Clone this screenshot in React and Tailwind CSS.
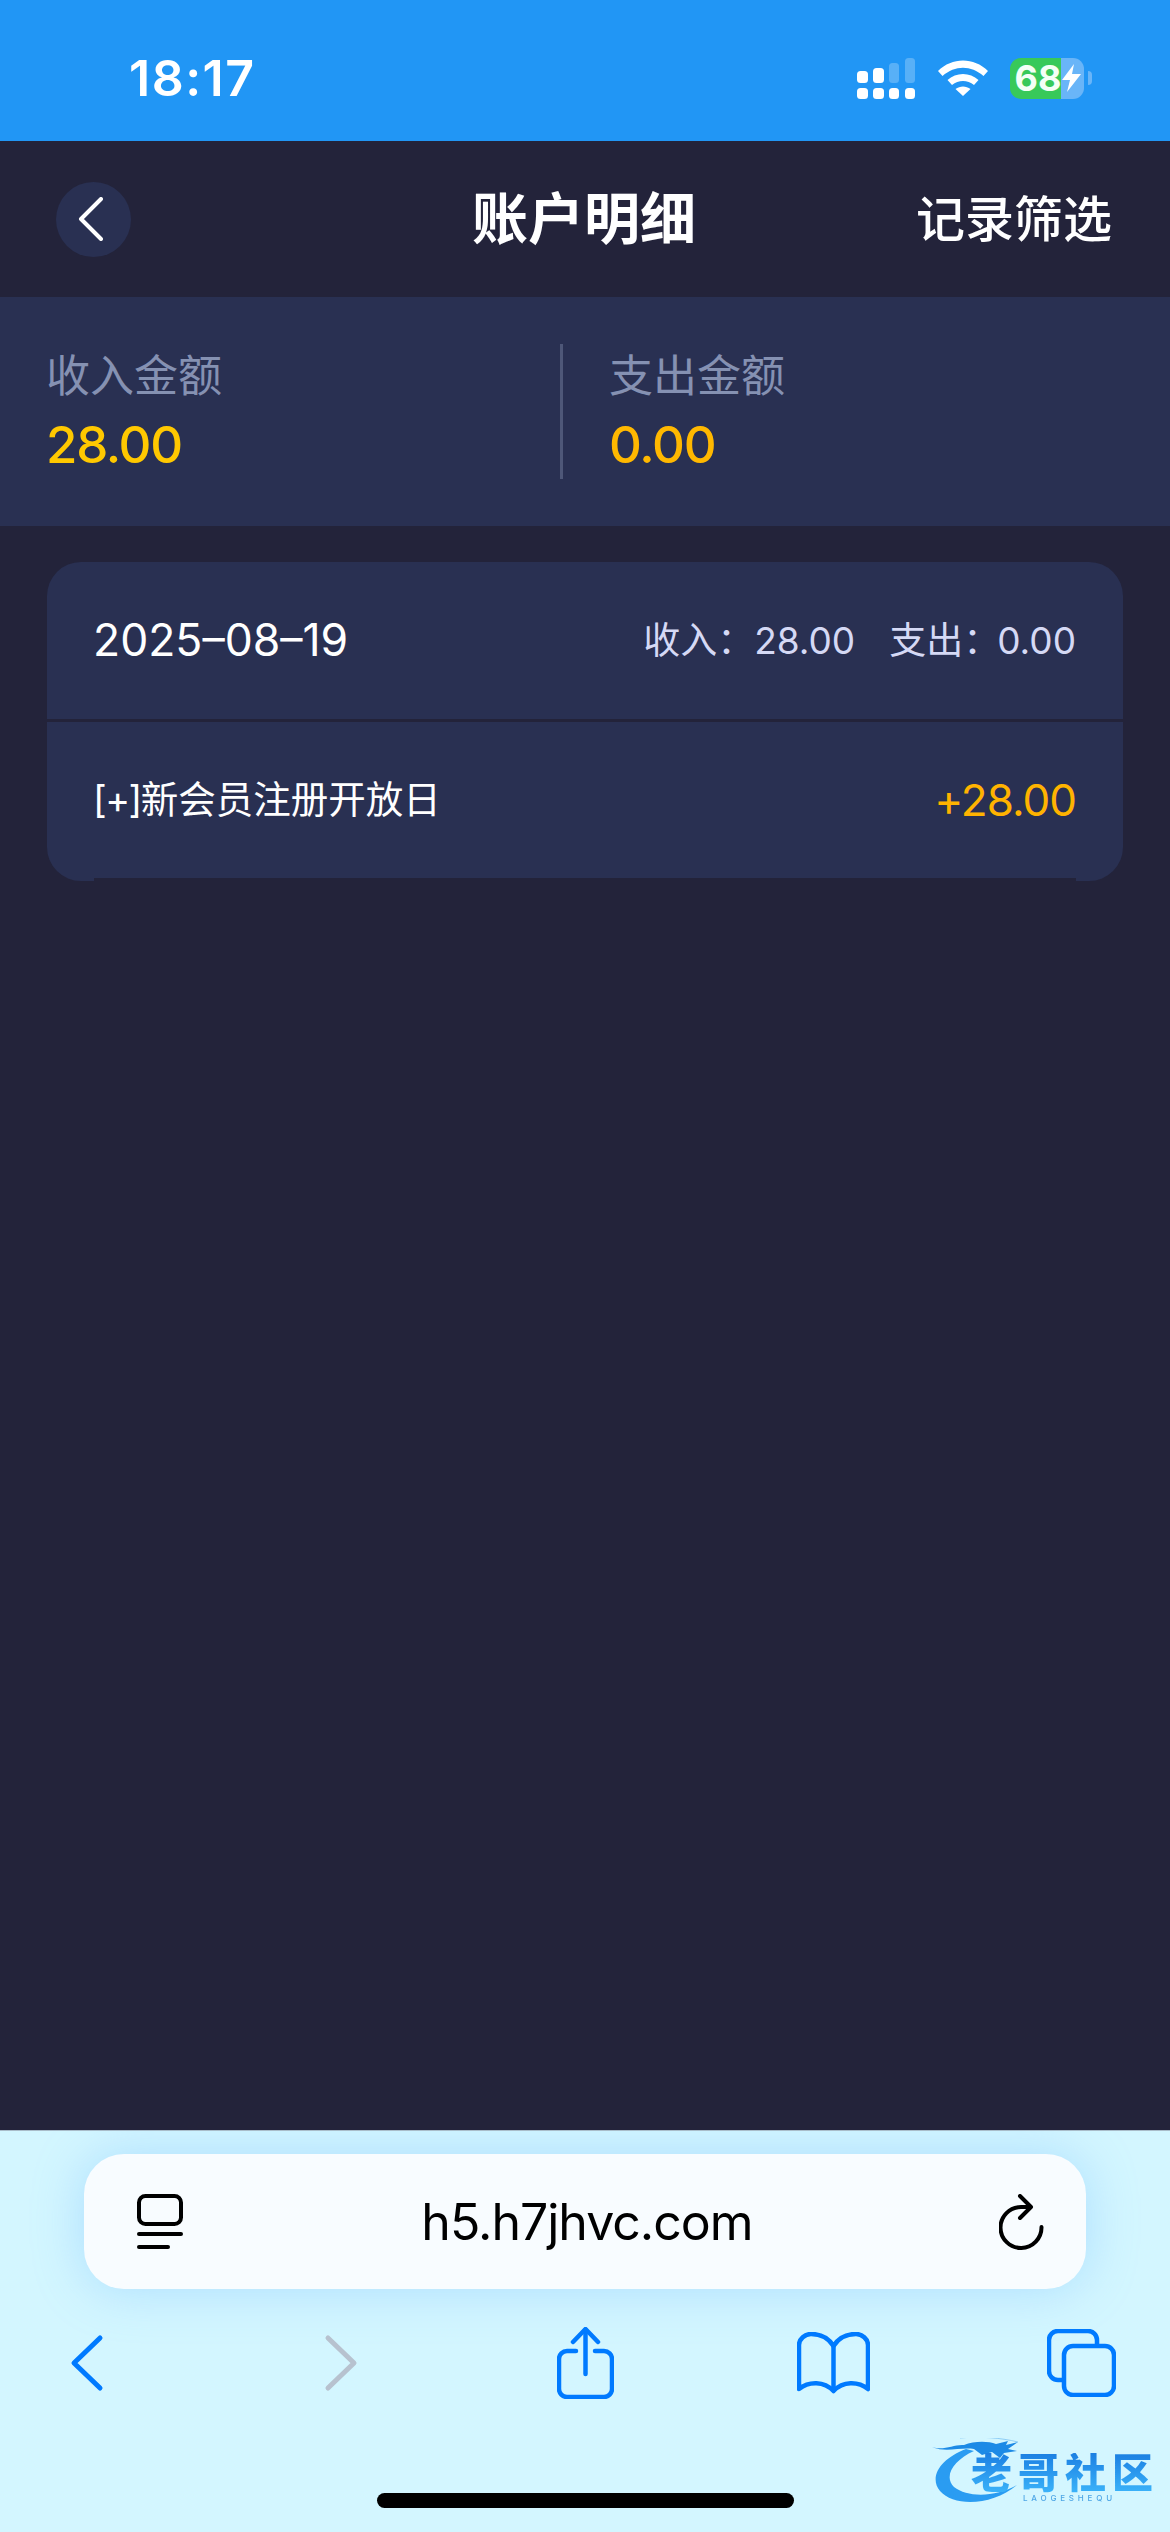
const SANS = "font-['Inter','Noto_Sans_CJK_SC',sans-serif]";

function SignalIcon() {
  return (
    <svg width="60" height="43" viewBox="0 0 60 43" fill="#fff">
      <rect x="0" y="14" width="11" height="12" rx="3.5" />
      <rect x="16" y="11" width="11" height="15" rx="3.5" />
      <rect x="32" y="6" width="10" height="20" rx="3.5" opacity="0.25" />
      <rect x="48" y="1" width="10" height="25" rx="3.5" opacity="0.25" />
      <rect x="0" y="31" width="11" height="11" rx="3.5" />
      <rect x="16" y="31" width="11" height="11" rx="3.5" />
      <rect x="32" y="31" width="10" height="11" rx="3.5" />
      <rect x="48" y="31" width="10" height="11" rx="3.5" />
    </svg>
  );
}

function WifiIcon() {
  return (
    <svg width="50" height="36" viewBox="0 0 50 36" fill="#fff">
      <path d="M0 11 C14 -3 36 -3 50 11 L45.500 16 C33 5 17 5 4.500 16 Z" />
      <path d="M9.500 20 C18 12 32 12 40.500 20 L36 25 C29.500 19.500 20.500 19.500 14 25 Z" />
      <path d="M17.500 29 C22 25.500 28 25.500 32.500 29 L25 36 Z" />
    </svg>
  );
}

function Battery() {
  return (
    <div className="flex items-center">
      <div className="flex h-[41px] w-[74px]">
        <div className="flex w-[51px] items-center justify-center rounded-l-[11px] bg-[#38c95a] pl-[5px]">
          <span className={`${SANS} text-[36px] font-bold leading-none text-[#f4fff6]`}>68</span>
        </div>
        <div className="flex flex-1 items-center rounded-r-[11px] bg-[#69b5f8] pl-[1px]">
          <svg width="19" height="28" viewBox="0 0 19 28" fill="#fff">
            <path d="M12 0 L0 16 L8 16 L5 28 L19 10 L10 10 Z" />
          </svg>
        </div>
      </div>
      <div className="ml-[4px] h-[14px] w-[4px] rounded-r-full bg-[#69b5f8]" />
    </div>
  );
}

function StatusBar() {
  return (
    <div className="flex h-[141px] shrink-0 items-center justify-between bg-[#2196f5] pl-[129px] pr-[78px] pt-[15px]">
      <span className={`${SANS} text-[50px] font-semibold leading-none tracking-[1.500px] text-white`}>18:17</span>
      <div className="flex items-center">
        <SignalIcon />
        <div className="ml-[21px] mr-[22px]">
          <WifiIcon />
        </div>
        <Battery />
      </div>
    </div>
  );
}

function Header() {
  return (
    <div className="grid h-[156px] shrink-0 grid-cols-[1fr_auto_1fr] items-center bg-[#23233a] pl-[56px] pr-[58px]">
      <div className="flex h-[75px] w-[75px] items-center justify-center rounded-full bg-[#293052] pr-[6px]">
        <svg width="26" height="44" viewBox="0 0 26 44" fill="none" stroke="#fff" strokeWidth="4" strokeLinecap="round" strokeLinejoin="round">
          <path d="M23 2 L3 22 L23 42" />
        </svg>
      </div>
      <h1 className={`${SANS} text-[56px] font-semibold leading-none text-white`}>账户明细</h1>
      <span className={`${SANS} justify-self-end text-[49px] font-medium leading-none text-white`}>记录筛选</span>
    </div>
  );
}

function SummaryCell({ label, value, valueColor }) {
  return (
    <div className="flex flex-col pl-[47px]">
      <span className={`${SANS} ml-[-1px] text-[44px] leading-none text-[#8591b2]`}>{label}</span>
      <span className={`${SANS} ml-[-1px] mt-[21px] text-[51px] font-medium leading-none tracking-[-1.300px] ${valueColor}`}>{value}</span>
    </div>
  );
}

function Summary() {
  return (
    <div className="flex h-[229px] shrink-0 items-center bg-[#293052]">
      <div className="w-[560px]">
        <SummaryCell label="收入金额" value="28.00" valueColor="text-[#ffc800]" />
      </div>
      <div className="h-[135px] w-[3px] bg-[#4e5778]" />
      <SummaryCell label="支出金额" value="0.00" valueColor="text-[#ffb800]" />
    </div>
  );
}

function DayCard() {
  return (
    <div className="mx-[47px] mt-[36px] overflow-hidden rounded-[34px] bg-[#293052]">
      <div className="flex h-[157px] items-center justify-between px-[47px]">
        <span className={`${SANS} ml-[-1px] text-[44.500px] leading-none text-white`}>2025–08–19</span>
        <div className={`${SANS} flex items-center text-[37px] leading-none text-[#d5d9f5]`}>
          <span>收入：</span>
          <span>28.00</span>
          <span className="ml-[34px]">支出：</span>
          <span className="ml-[-3px]">0.00</span>
        </div>
      </div>
      <div className="h-[3px] bg-[#23233a]" />
      <div className="h-[159px] px-[47px]">
        <div className="flex h-full items-center justify-between border-b-[3px] border-[#23233a]">
          <span className={`${SANS} ml-[-1px] text-[37.500px] leading-none text-white`}>
            <span className="tracking-[-1.500px]">[+]</span>新会员注册开放日
          </span>
          <span className={`${SANS} text-[44px] leading-none tracking-[-1px] text-[#ffb300]`}>+28.00</span>
        </div>
      </div>
    </div>
  );
}

function AddressBar() {
  return (
    <div className="mx-[84px] mt-[23px] flex h-[135px] items-center justify-between rounded-[40px] bg-[#f8fcff] pl-[53px] pr-[42px] shadow-[0_0_50px_rgba(110,185,255,0.38)]">
      <svg width="46" height="55" viewBox="0 0 46 55" fill="none" stroke="#000" strokeWidth="4" strokeLinecap="round">
        <rect x="2" y="2" width="42" height="28" rx="6.500" />
        <path d="M2 40 H44" />
        <path d="M2 53 H31" />
      </svg>
      <span className={`${SANS} mr-[8px] text-[50px] leading-none tracking-[-1px] text-black`}>h5.h7jhvc.com</span>
      <svg width="45" height="56" viewBox="0 0 45 56" fill="none" stroke="#000" strokeWidth="4" strokeLinecap="round" strokeLinejoin="round">
        <path d="M42.500 33 A20.500 20.500 0 1 1 22 13 H31" />
        <path d="M21 2 L32 13 L21 24" />
      </svg>
    </div>
  );
}

function ToolbarIcons() {
  return (
    <div className="mt-[38px] flex h-[72px] items-center">
      <svg className="ml-[70px]" width="34" height="58" viewBox="0 0 34 58" fill="none" stroke="#007aff" strokeWidth="5" strokeLinecap="round" strokeLinejoin="round">
        <path d="M30 4 L4 29 L30 54" />
      </svg>
      <svg className="ml-[220px]" width="34" height="58" viewBox="0 0 34 58" fill="none" stroke="#b7c2cf" strokeWidth="5" strokeLinecap="round" strokeLinejoin="round">
        <path d="M4 4 L30 29 L4 54" />
      </svg>
      <svg className="ml-[199px]" width="57" height="72" viewBox="0 0 57 72" fill="none" stroke="#007aff" strokeWidth="4.500" strokeLinecap="round" strokeLinejoin="round">
        <path d="M19 24 H10 A8 8 0 0 0 2 32 V62 A8 8 0 0 0 10 70 H47 A8 8 0 0 0 55 62 V32 A8 8 0 0 0 47 24 H38" />
        <path d="M28.500 47 V3" />
        <path d="M16 15 L28.500 2 L41 15" />
      </svg>
      <svg className="ml-[183px]" width="73" height="62" viewBox="0 0 73 62" fill="none" stroke="#007aff" strokeWidth="4.500" strokeLinecap="round" strokeLinejoin="round">
        <path d="M36.500 14 C31 5 22 2 14 2 C8 2 2 7 2 13 V57 C12 49 27 49 36.500 59 C46 49 61 49 71 57 V13 C71 7 65 2 59 2 C51 2 42 5 36.500 14 Z" />
        <path d="M36.500 14 V58" />
      </svg>
      <svg className="ml-[177px]" width="69" height="68" viewBox="0 0 69 68" fill="none" stroke="#007aff" strokeWidth="4.500" strokeLinejoin="round">
        <path d="M50 17 V11 A9 9 0 0 0 41 2 H11 A9 9 0 0 0 2 11 V42 A9 9 0 0 0 11 51 H17" />
        <rect x="17" y="17" width="50" height="49" rx="9" />
      </svg>
    </div>
  );
}

// Community badge: a dragon curling round the wordmark
function Watermark() {
  return (
    <div className="absolute bottom-[26px] left-[930px] h-[68px] w-[230px] blur-[0.7px]">
      <svg className="absolute left-0 top-0" width="104" height="68" viewBox="0 0 104 68">
        <path d="M36 11 C12 20 -2 38 10 53 C24 69 62 68 87 47 C66 59 38 60 24 49 C13 38 24 22 44 13 Z" fill="#2a9cf2" />
        <path d="M2 9 C14 13 24 6 34 7 C44 3 58 3 66 6 L78 3 L76 7 L88 4 L78 11 L87 13 L74 15 L70 20 L62 14 L52 17 L44 11 C30 9 16 15 2 9 Z" fill="#1c8ae6" />
        <path d="M30 0 C50 -2 72 0 88 4" fill="none" stroke="#7cc4f4" strokeWidth="0.800" />
      </svg>
      <span className={`${SANS} absolute left-[41px] top-[15px] bg-gradient-to-b from-[#1c7fe2] to-[#3cb4fa] bg-clip-text text-[41px] font-black leading-none tracking-[6px] text-transparent`}>
        老哥社区
      </span>
      <span className={`${SANS} absolute left-[93px] top-[56px] text-[8px] font-medium leading-none tracking-[3.800px] text-[#4ea6e6]`}>
        LAOGESHEQU
      </span>
    </div>
  );
}

function BrowserChrome() {
  return (
    <div className="relative flex flex-1 flex-col overflow-hidden border-t border-[#a9bcc9] bg-[#d3f6ff]">
      <AddressBar />
      <ToolbarIcons />
      <div className="mx-auto mt-[94px] h-[15px] w-[417px] rounded-full bg-black" />
      <Watermark />
    </div>
  );
}

export default function App() {
  return (
    <div className="flex h-[2532px] w-[1170px] flex-col overflow-hidden bg-[#23233a]">
      <StatusBar />
      <Header />
      <Summary />
      <div className="h-[1604px] shrink-0">
        <DayCard />
      </div>
      <BrowserChrome />
    </div>
  );
}
